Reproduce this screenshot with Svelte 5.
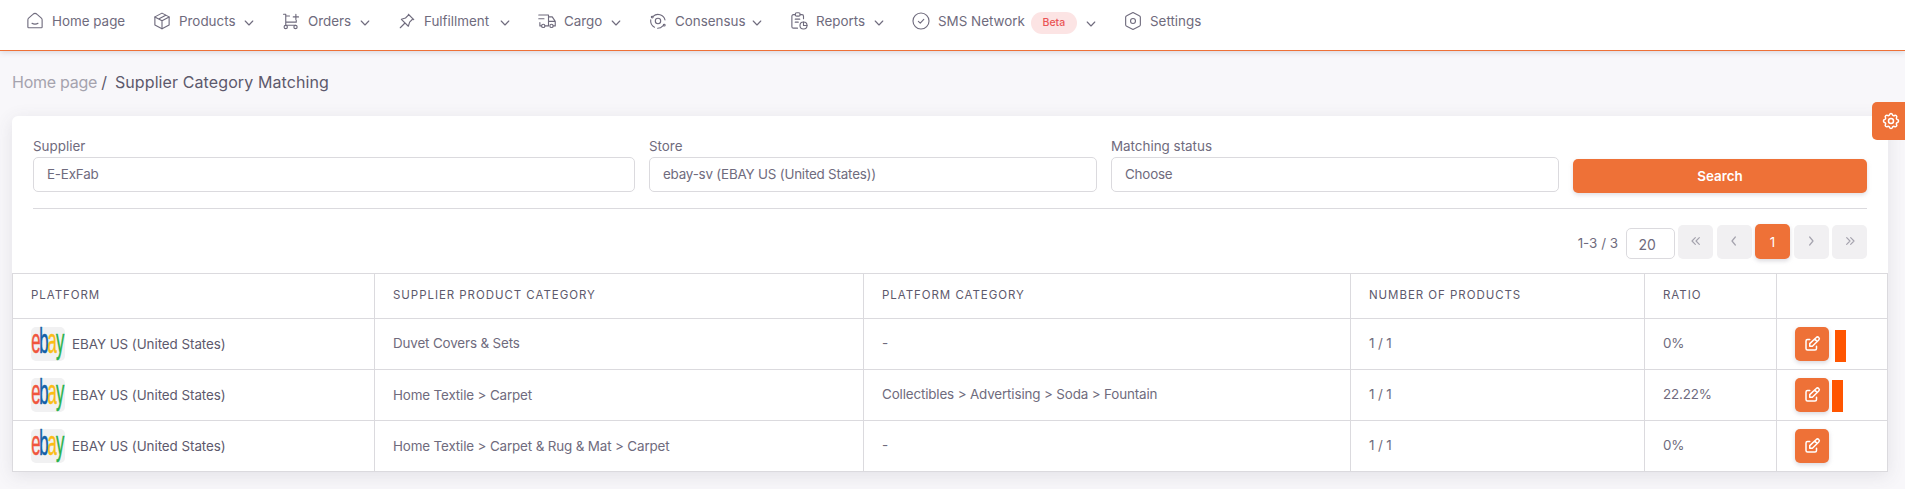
<script>
  const nav = [
    { label: 'Home page', icon: 'home' },
    { label: 'Products', icon: 'box', menu: true },
    { label: 'Orders', icon: 'cart', menu: true },
    { label: 'Fulfillment', icon: 'pin', menu: true },
    { label: 'Cargo', icon: 'truck', menu: true },
    { label: 'Consensus', icon: 'orbit', menu: true },
    { label: 'Reports', icon: 'report', menu: true },
    { label: 'SMS Network', icon: 'check', badge: 'Beta', menu: true },
    { label: 'Settings', icon: 'hex' }
  ];

  const icons = {
    home: '<path d="M2.500 10.500a3 3 0 0 1 1-2.300l5.700-5a4 4 0 0 1 5.600 0l5.700 5a3 3 0 0 1 1 2.300v9.500a1 1 0 0 1-1 1h-17a1 1 0 0 1-1-1z"/><path d="M8 15c2 1.500 6 1.500 8 0"/>',
    box: '<path d="m12 1.500 9.500 5v10.800l-9.500 5-9.500-5V6.500z"/><path d="m12 11.800 9.500-5M12 11.800v10.400M12 11.800l-9.500-5M17 4.300l-9.500 5"/>',
    cart: '<circle cx="5" cy="20" r="2.200"/><circle cx="18" cy="20" r="2.200"/><path d="M18 17.600H5V3H2M5 5l5 .4M5 13.500h14v-2.500M15 6.500h7M18.500 3v7"/>',
    pin: '<path d="m14.500 3.500-4.500 4.500-5.500 1.700 9.300 9.300 1.700-5.500 4.500-4.500M9 15l-6 6M13.800 3l7.200 7.200"/>',
    truck: '<circle cx="7" cy="18.500" r="2.200"/><circle cx="18" cy="18.500" r="2.200"/><path d="M1 4h13v14.500H9.300M4.700 18.500H2.500V14M1 9h7M14 6.500h5l4 6v6h-2.700M14 12.500h9"/>',
    orbit: '<circle cx="12" cy="12" r="3.600"/><path d="M5.500 5.800A9.600 9.600 0 0 1 21.300 10.500M2.300 10.500a9.600 9.600 0 0 0 5 9.700M11.500 21.600a9.600 9.600 0 0 0 7-3.200"/><circle cx="4.300" cy="6.800" r="1.200"/><circle cx="20.300" cy="17.500" r="1.200"/>',
    report: '<path d="M7 3.500H4.500a2 2 0 0 0-2 2v14a2 2 0 0 0 2 2H10M18 9V5.500a2 2 0 0 0-2-2h-2.500"/><rect x="7" y="1" width="6.500" height="4.500" rx="2"/><path d="M7 9.500h6M7 13.500h4"/><circle cx="18" cy="18" r="4.700"/><path d="M18 13.300V18h4.700"/>',
    check: '<circle cx="12" cy="12" r="10.700"/><path d="m8.500 12.500 2.500 2.300 4.700-5"/>',
    hex: '<path d="m12 .8 8.400 4.200a2.400 2.400 0 0 1 1.400 2.100v9.800a2.400 2.400 0 0 1-1.400 2.100l-8.400 4.200-8.400-4.200a2.400 2.400 0 0 1-1.400-2.100V7.100a2.400 2.400 0 0 1 1.400-2.100z"/><circle cx="12" cy="12" r="3.300"/>'
  };

  const fields = [
    { label: 'Supplier', value: 'E-ExFab' },
    { label: 'Store', value: 'ebay-sv (EBAY US (United States))' },
    { label: 'Matching status', value: 'Choose' }
  ];

  const pages = [
    { name: 'First', d: 'm11 7-5 5 5 5M17 7l-5 5 5 5' },
    { name: 'Previous', d: 'm14 6-5 6 5 6' },
    { name: '1', active: true },
    { name: 'Next', d: 'm10 6 5 6-5 6' },
    { name: 'Last', d: 'm7 7 5 5-5 5M13 7l5 5-5 5' }
  ];

  const heads = ['Platform', 'Supplier Product Category', 'Platform Category', 'Number of Products', 'Ratio', ''];

  const rows = [
    { supplier: 'Duvet Covers & Sets', platform: '-', count: '1 / 1', ratio: '0%', mark: 'far' },
    { supplier: 'Home Textile > Carpet', platform: 'Collectibles > Advertising > Soda > Fountain', count: '1 / 1', ratio: '22.22%', mark: 'near' },
    { supplier: 'Home Textile > Carpet & Rug & Mat > Carpet', platform: '-', count: '1 / 1', ratio: '0%' }
  ];
</script>

<header>
  <nav>
    {#each nav as item}
      <a class="item" href="#top">
        <svg class="ico" viewBox="0 0 24 24">{@html icons[item.icon]}</svg>
        <span class="label">{item.label}</span>
        {#if item.badge}<span class="badge">{item.badge}</span>{/if}
        {#if item.menu}
          <svg class="chev" class:low={item.badge} viewBox="0 0 10 10"><path d="m1.200 3 3.800 4L8.800 3" /></svg>
        {/if}
      </a>
    {/each}
  </nav>
</header>

<main>
  <h1><span class="crumb">Home page</span><span class="slash">/</span><span class="title">Supplier Category Matching</span></h1>

  <section class="card">
    <form>
      {#each fields as f}
        <div class="field">
          <span class="name">{f.label}</span>
          <div class="input">{f.value}</div>
        </div>
      {/each}
      <button class="search" type="button">Search</button>
    </form>

    <div class="pager">
      <span class="range">1-3 / 3</span>
      <div class="size">20</div>
      {#each pages as p}
        <button class="page" class:active={p.active} type="button" aria-label={p.name}>
          {#if p.active}{p.name}{:else}<svg viewBox="0 0 24 24"><path d={p.d} /></svg>{/if}
        </button>
      {/each}
    </div>

    <div class="table">
      <div class="row head">
        {#each heads as h}<div class="cell">{h}</div>{/each}
      </div>
      {#each rows as r, i}
        <div class="row">
          <div class="cell shop">
            <svg class="logo" viewBox="0 0 34 34">
              <rect width="34" height="34" rx="5" fill="#f1f1f2" />
              <g transform="translate(.3 26.300) scale(.465 1)" font-family="Liberation Sans, sans-serif" font-size="36">
                <text x="0" fill="#f0563c" stroke="#f0563c">e</text>
                <text x="17" fill="#1360a8" stroke="#1360a8">b</text>
                <text x="35" fill="#fbbd16" stroke="#fbbd16">a</text>
                <text x="53" fill="#29b34a" stroke="#29b34a">y</text>
              </g>
            </svg>
            <span>EBAY US (United States)</span>
          </div>
          <div class="cell" class:lower={i > 0}>{r.supplier}</div>
          <div class="cell">{r.platform}</div>
          <div class="cell">{r.count}</div>
          <div class="cell">{r.ratio}</div>
          <div class="cell act">
            <button class="edit" type="button" aria-label="Edit">
              <svg viewBox="0 0 24 24"><path d="M9 6H6a2 2 0 0 0-2 2v10a2 2 0 0 0 2 2h10a2 2 0 0 0 2-2v-3" /><path d="M9 15v-3.500l8.700-8.200a2.300 2.300 0 0 1 3.300 3.300L12.500 15zM15.700 5.500l3 3" /></svg>
            </button>
            {#if r.mark}<i class="mark {r.mark}"></i>{/if}
          </div>
        </div>
      {/each}
    </div>
  </section>
</main>

<button class="gear" type="button" aria-label="Customize">
  <svg viewBox="0 0 24 24"><path d="M10.300 4.300c.4-1.700 3-1.700 3.400 0a1.700 1.700 0 0 0 2.600 1.100c1.500-.9 3.300.8 2.400 2.400a1.700 1.700 0 0 0 1 2.500c1.800.4 1.800 3 0 3.400a1.700 1.700 0 0 0-1 2.600c.9 1.500-.9 3.300-2.400 2.400a1.700 1.700 0 0 0-2.600 1c-.4 1.800-3 1.800-3.400 0a1.700 1.700 0 0 0-2.600-1c-1.500.9-3.300-.9-2.400-2.400a1.700 1.700 0 0 0-1-2.600c-1.800-.4-1.800-3 0-3.400a1.700 1.700 0 0 0 1-2.600c-.9-1.500.9-3.300 2.400-2.400 1 .6 2.300.1 2.600-1z" /><circle cx="12" cy="12" r="3" /></svg>
</button>

<style>
  :global(body) {
    background: #f8f7fa;
    height: 489px;
    overflow: hidden;
    font-family: Inter, "Liberation Sans", sans-serif;
    font-size: 13.400px;
    color: #6f6b7d;
  }
  svg { fill: none; stroke: currentColor; stroke-width: 1.800; stroke-linecap: round; stroke-linejoin: round; flex: none; overflow: visible; }
  button { font: inherit; border: 0; padding: 0; display: flex; align-items: center; justify-content: center; color: #fff; background: #ee7137; }
  header { height: 50px; background: #fff; border-bottom: 1px solid #ee7137; box-shadow: 0 1px 6px rgba(75, 70, 92, .2); }
  nav { display: grid; grid-template-columns: 127px 129px 116px 140px 111px 141px 122px 212px 110px; padding-left: 26px; height: 42px; }
  .item { display: flex; align-items: center; color: inherit; text-decoration: none; white-space: nowrap; }
  .label { margin-top: -1px; }
  .ico { width: 18px; height: 18px; margin-right: 8px; stroke-width: 1.500; }
  .chev { width: 10px; height: 10px; margin: 3px 28px 0 auto; stroke-width: 1.100; }
  .chev.low { margin-top: 5px; }
  .badge { margin: 3px 0 0 6px; width: 46px; height: 22px; border-radius: 11px; background: #fce4e4; color: #ea5455; font-size: 10.500px; font-weight: 500; line-height: 21px; text-align: center; }

  main { padding: 0 17px 0 12px; }
  h1 { margin: 0; box-sizing: border-box; height: 65px; padding-bottom: 3px; display: flex; align-items: center; font-size: 16px; font-weight: 400; color: #5d596c; }
  .crumb { color: #a5a3ae; letter-spacing: -.25px; }
  .slash { margin: 0 8px 0 4px; }
  .title { letter-spacing: .1px; }

  .card { height: 356px; background: #fff; border-radius: 6px 6px 0 0; box-shadow: 0 4px 18px rgba(75, 70, 92, .12); }
  form { display: grid; grid-template-columns: 602px 448px 448px 294px; gap: 14px; margin: 0 21px; padding-top: 21px; height: 71px; border-bottom: 1px solid #dbdade; }
  .name { display: block; height: 20px; line-height: 19px; }
  .input { box-sizing: border-box; height: 35px; border: 1px solid #dbdade; border-radius: 5px; padding-left: 13px; line-height: 33px; letter-spacing: -.2px; }
  .search { height: 34px; margin-top: 22px; border-radius: 5px; font-weight: 600; box-shadow: 0 2px 4px rgba(165, 163, 174, .35); }

  .pager { display: flex; align-items: flex-end; justify-content: flex-end; height: 50px; margin-right: 21px; gap: 3.500px; }
  .range { line-height: 31px; margin-right: 4px; }
  .size { box-sizing: border-box; width: 49px; height: 31px; border: 1px solid #dbdade; border-radius: 5px; padding-left: 12px; line-height: 31px; font-size: 14px; }
  .page { width: 35px; height: 34px; border-radius: 5px; background: #f1f0f2; color: #a5a3ae; }
  .page svg { width: 16px; height: 16px; margin-bottom: 3px; }
  .page.active { height: 35px; background: #ee7137; color: #fff; box-shadow: 0 2px 4px rgba(165, 163, 174, .4); }

  .table { margin-top: 14px; border: 1px solid #dbdade; border-bottom: 0; }
  .row { display: grid; grid-template-columns: 362px 489px 487px 294px 132px 1fr; height: 50px; border-bottom: 1px solid #dbdade; }
  .cell { display: flex; align-items: center; padding: 0 0 2px 18px; border-right: 1px solid #dbdade; white-space: nowrap; letter-spacing: -.14px; }
  .cell:last-child { border-right: 0; }
  .head { height: 44px; }
  .head .cell { font-size: 11.500px; letter-spacing: .95px; text-transform: uppercase; color: #5d596c; }
  .lower { padding-bottom: 0; }
  .shop, .act { padding-bottom: 0; color: #5d596c; letter-spacing: -.05px; }
  .logo { width: 34px; height: 34px; margin-right: 7px; stroke: none; }
  .logo text { stroke-width: .5; letter-spacing: 0; }
  .act { position: relative; }
  .edit { width: 34px; height: 34px; border-radius: 5px; box-shadow: 0 2px 4px rgba(165, 163, 174, .4); }
  .edit svg { width: 18px; height: 18px; stroke-width: 2; }
  .mark { position: absolute; width: 11px; height: 32px; background: #ff5500; }
  .far { left: 58px; top: 11px; }
  .near { left: 55px; top: 10px; }

  .gear { position: absolute; right: 0; top: 102px; width: 33px; height: 38px; border-radius: 5px 0 0 5px; }
  .gear svg { width: 20px; height: 20px; margin-left: 5px; }
</style>
